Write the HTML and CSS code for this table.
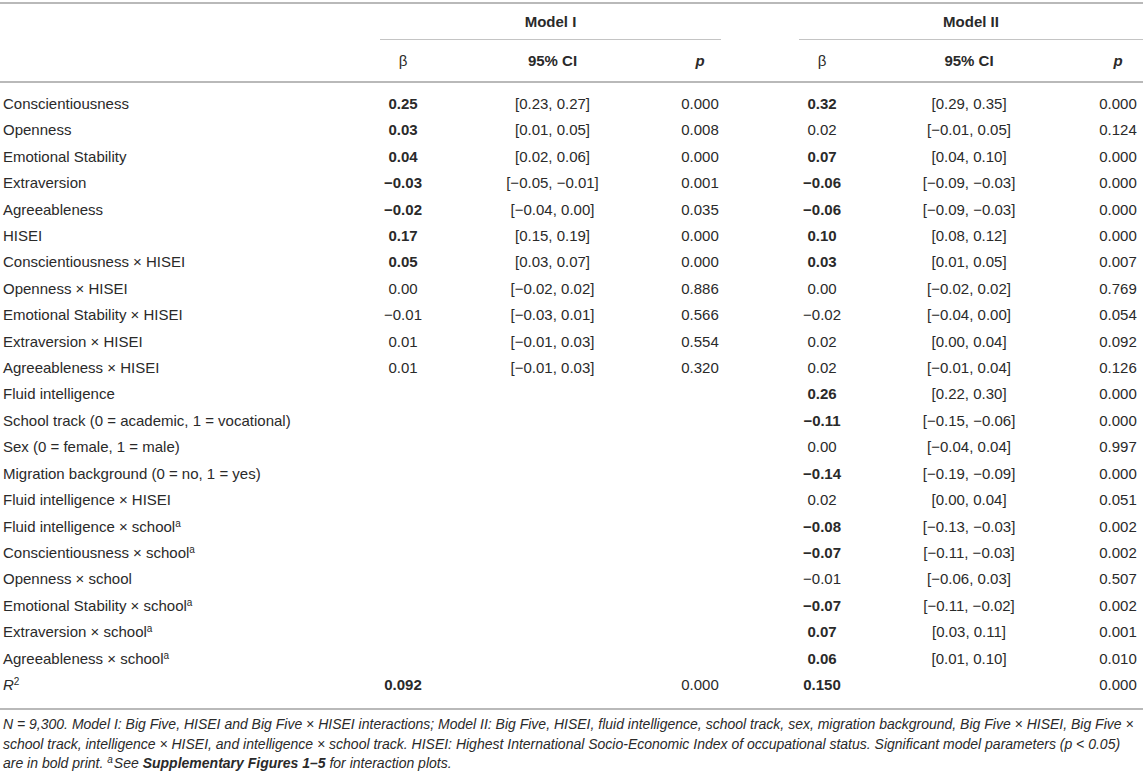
FILE: index.html
```html
<!DOCTYPE html>
<html lang="en">
<head>
<meta charset="utf-8">
<title>Table</title>
<link rel="stylesheet" href="styles.css">
</head>
<body>
<table class="tbl">
  <colgroup>
    <col class="c-label">
    <col class="c-beta">
    <col class="c-ci">
    <col class="c-p1">
    <col class="c-gap">
    <col class="c-beta">
    <col class="c-ci2">
    <col class="c-p2">
  </colgroup>
  <thead>
    <tr class="h1">
      <th></th>
      <th colspan="3" class="model">Model I</th>
      <th></th>
      <th colspan="3" class="model">Model II</th>
    </tr>
    <tr class="h2">
      <th></th>
      <th class="greek">β</th>
      <th>95% CI</th>
      <th><i>p</i></th>
      <th></th>
      <th class="greek">β</th>
      <th>95% CI</th>
      <th><i>p</i></th>
    </tr>
  </thead>
  <tbody>
    <tr class="first"><td>Conscientiousness</td><td><b>0.25</b></td><td>[0.23, 0.27]</td><td>0.000</td><td></td><td><b>0.32</b></td><td>[0.29, 0.35]</td><td>0.000</td></tr>
    <tr><td>Openness</td><td><b>0.03</b></td><td>[0.01, 0.05]</td><td>0.008</td><td></td><td>0.02</td><td>[−0.01, 0.05]</td><td>0.124</td></tr>
    <tr><td>Emotional Stability</td><td><b>0.04</b></td><td>[0.02, 0.06]</td><td>0.000</td><td></td><td><b>0.07</b></td><td>[0.04, 0.10]</td><td>0.000</td></tr>
    <tr><td>Extraversion</td><td><b>−0.03</b></td><td>[−0.05, −0.01]</td><td>0.001</td><td></td><td><b>−0.06</b></td><td>[−0.09, −0.03]</td><td>0.000</td></tr>
    <tr><td>Agreeableness</td><td><b>−0.02</b></td><td>[−0.04, 0.00]</td><td>0.035</td><td></td><td><b>−0.06</b></td><td>[−0.09, −0.03]</td><td>0.000</td></tr>
    <tr><td>HISEI</td><td><b>0.17</b></td><td>[0.15, 0.19]</td><td>0.000</td><td></td><td><b>0.10</b></td><td>[0.08, 0.12]</td><td>0.000</td></tr>
    <tr><td>Conscientiousness × HISEI</td><td><b>0.05</b></td><td>[0.03, 0.07]</td><td>0.000</td><td></td><td><b>0.03</b></td><td>[0.01, 0.05]</td><td>0.007</td></tr>
    <tr><td>Openness × HISEI</td><td>0.00</td><td>[−0.02, 0.02]</td><td>0.886</td><td></td><td>0.00</td><td>[−0.02, 0.02]</td><td>0.769</td></tr>
    <tr><td>Emotional Stability × HISEI</td><td>−0.01</td><td>[−0.03, 0.01]</td><td>0.566</td><td></td><td>−0.02</td><td>[−0.04, 0.00]</td><td>0.054</td></tr>
    <tr><td>Extraversion × HISEI</td><td>0.01</td><td>[−0.01, 0.03]</td><td>0.554</td><td></td><td>0.02</td><td>[0.00, 0.04]</td><td>0.092</td></tr>
    <tr><td>Agreeableness × HISEI</td><td>0.01</td><td>[−0.01, 0.03]</td><td>0.320</td><td></td><td>0.02</td><td>[−0.01, 0.04]</td><td>0.126</td></tr>
    <tr><td>Fluid intelligence</td><td></td><td></td><td></td><td></td><td><b>0.26</b></td><td>[0.22, 0.30]</td><td>0.000</td></tr>
    <tr><td>School track (0 = academic, 1 = vocational)</td><td></td><td></td><td></td><td></td><td><b>−0.11</b></td><td>[−0.15, −0.06]</td><td>0.000</td></tr>
    <tr><td>Sex (0 = female, 1 = male)</td><td></td><td></td><td></td><td></td><td>0.00</td><td>[−0.04, 0.04]</td><td>0.997</td></tr>
    <tr><td>Migration background (0 = no, 1 = yes)</td><td></td><td></td><td></td><td></td><td><b>−0.14</b></td><td>[−0.19, −0.09]</td><td>0.000</td></tr>
    <tr><td>Fluid intelligence × HISEI</td><td></td><td></td><td></td><td></td><td>0.02</td><td>[0.00, 0.04]</td><td>0.051</td></tr>
    <tr><td>Fluid intelligence × school<sup>a</sup></td><td></td><td></td><td></td><td></td><td><b>−0.08</b></td><td>[−0.13, −0.03]</td><td>0.002</td></tr>
    <tr><td>Conscientiousness × school<sup>a</sup></td><td></td><td></td><td></td><td></td><td><b>−0.07</b></td><td>[−0.11, −0.03]</td><td>0.002</td></tr>
    <tr><td>Openness × school</td><td></td><td></td><td></td><td></td><td>−0.01</td><td>[−0.06, 0.03]</td><td>0.507</td></tr>
    <tr><td>Emotional Stability × school<sup>a</sup></td><td></td><td></td><td></td><td></td><td><b>−0.07</b></td><td>[−0.11, −0.02]</td><td>0.002</td></tr>
    <tr><td>Extraversion × school<sup>a</sup></td><td></td><td></td><td></td><td></td><td><b>0.07</b></td><td>[0.03, 0.11]</td><td>0.001</td></tr>
    <tr><td>Agreeableness × school<sup>a</sup></td><td></td><td></td><td></td><td></td><td><b>0.06</b></td><td>[0.01, 0.10]</td><td>0.010</td></tr>
    <tr class="last"><td><i>R</i><sup class="sq">2</sup></td><td><b>0.092</b></td><td></td><td>0.000</td><td></td><td><b>0.150</b></td><td></td><td>0.000</td></tr>
  </tbody>
</table>
<p class="note">N = 9,300. Model I: Big Five, HISEI and Big Five × HISEI interactions; Model II: Big Five, HISEI, fluid intelligence, school track, sex, migration background, Big Five × HISEI, Big Five × school track, intelligence × HISEI, and intelligence × school track. HISEI: Highest International Socio-Economic Index of occupational status. Significant model parameters (p &lt; 0.05) are in bold print. <sup class="fn">a</sup>See <b>Supplementary Figures 1–5</b> for interaction plots.</p>
</body>
</html>
```

FILE: styles.css
```css
html, body {
  margin: 0;
  padding: 0;
  background: #ffffff;
}

body {
  font-family: "Liberation Sans", Arial, sans-serif;
  color: #2a2a2a;
  font-size: 15px;
  padding-top: 2px;
}

.tbl {
  width: 1143px;
  border-collapse: collapse;
  table-layout: fixed;
  border-top: 2px solid #b9b9b9;
  border-bottom: 2px solid #b9b9b9;
}

.c-label { width: 380px; }
.c-beta { width: 46px; }
.c-ci { width: 253px; }
.c-p1 { width: 42px; }
.c-gap { width: 78px; }
.c-ci2 { width: 248px; }
.c-p2 { width: 50px; }

.tbl th,
.tbl td {
  padding: 0;
  text-align: center;
  white-space: nowrap;
  font-weight: normal;
}

.tbl th {
  font-weight: bold;
}

.h1 th {
  height: 35px;
  vertical-align: middle;
}

.h1 th.model {
  border-bottom: 1px solid #c4c4c4;
}

.h2 th {
  height: 41px;
  vertical-align: middle;
  border-bottom: 2px solid #b9b9b9;
}

.h2 th.greek {
  font-weight: normal;
}

.tbl td {
  height: 26.4px;
  line-height: 26.4px;
}

.tbl td:first-child {
  text-align: left;
  padding-left: 3px;
}

.tbl td b {
  font-weight: bold;
}

.tbl tr.first td {
  padding-top: 8px;
}

.tbl tr.last td {
  padding-bottom: 10px;
}

sup {
  font-size: 10px;
  line-height: 0;
  vertical-align: 5px;
}

.note {
  margin: 5px 0 0 0;
  padding: 0 3px;
  font-size: 14px;
  line-height: 19.5px;
  font-style: italic;
}

.note b {
  font-weight: bold;
}

.note sup.fn {
  font-size: 10px;
  margin-right: 1px;
}
```
